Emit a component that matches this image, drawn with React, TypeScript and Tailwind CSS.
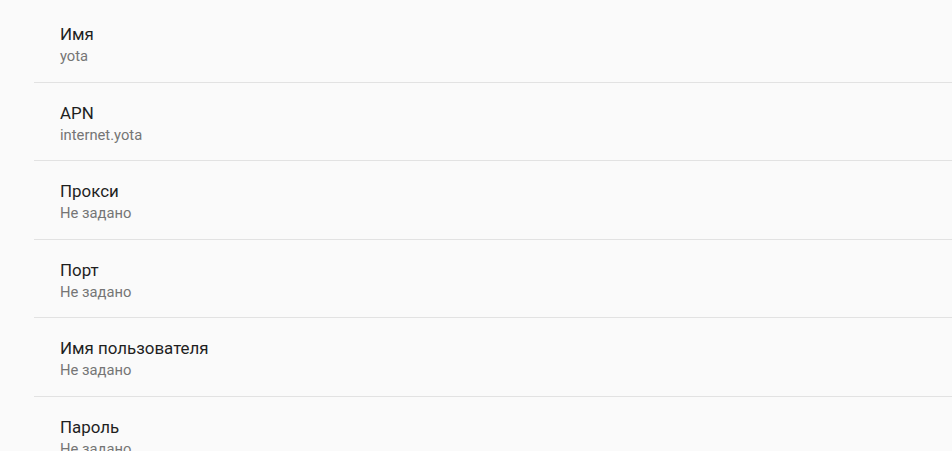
import React from "react";

const items = [
  { title: "Имя", value: "yota" },
  { title: "APN", value: "internet.yota" },
  { title: "Прокси", value: "Не задано" },
  { title: "Порт", value: "Не задано" },
  { title: "Имя пользователя", value: "Не задано" },
  { title: "Пароль", value: "Не задано" },
];

export default function App() {
  return (
    <div
      className="w-full h-screen overflow-hidden bg-[#fafafa] pt-[4px]"
      style={{ fontFamily: "Roboto, 'Noto Sans', sans-serif" }}
    >
      {items.map((it, i) => (
        <div key={i}>
          <div className="h-[77.5px] flex flex-col pl-[60px] pt-[18px]">
            <div className="text-[16.9px] leading-6 text-[#1f1f1f]">{it.title}</div>
            <div className="text-[14.75px] leading-5 text-[#757575]">{it.value}</div>
          </div>
          <div className="h-px ml-[34px] bg-[#e2e2e2]" />
        </div>
      ))}
    </div>
  );
}
